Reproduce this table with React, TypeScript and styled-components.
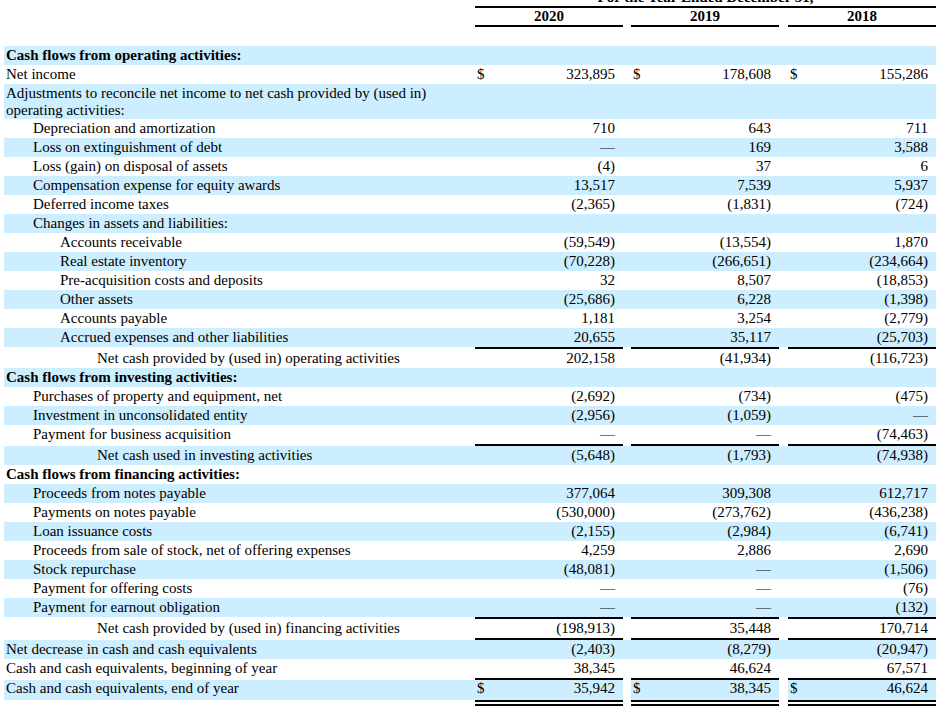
import React from "react";
import styled, { createGlobalStyle, css } from "styled-components";

const GlobalStyle = createGlobalStyle`
  html, body {
    margin: 0;
    padding: 0;
    background: #ffffff;
  }
  body {
    font-family: "Liberation Serif", "Times New Roman", serif;
    color: #000000;
    overflow: hidden;
  }
`;

const BLUE = "#cceeff";

type Row = {
  label: string;
  indent: 0 | 1 | 2 | 3;
  bold?: boolean;
  values?: [string, string, string];
  dollar?: boolean;
  total?: boolean;
  final?: boolean;
  multi?: boolean;
};

const rows: Row[] = [
  { label: "Cash flows from operating activities:", indent: 0, bold: true },
  { label: "Net income", indent: 0, values: ["323,895", "178,608", "155,286"], dollar: true },
  { label: "Adjustments to reconcile net income to net cash provided by (used in) operating activities:", indent: 0, multi: true },
  { label: "Depreciation and amortization", indent: 1, values: ["710", "643", "711"] },
  { label: "Loss on extinguishment of debt", indent: 1, values: ["—", "169", "3,588"] },
  { label: "Loss (gain) on disposal of assets", indent: 1, values: ["(4)", "37", "6"] },
  { label: "Compensation expense for equity awards", indent: 1, values: ["13,517", "7,539", "5,937"] },
  { label: "Deferred income taxes", indent: 1, values: ["(2,365)", "(1,831)", "(724)"] },
  { label: "Changes in assets and liabilities:", indent: 1 },
  { label: "Accounts receivable", indent: 2, values: ["(59,549)", "(13,554)", "1,870"] },
  { label: "Real estate inventory", indent: 2, values: ["(70,228)", "(266,651)", "(234,664)"] },
  { label: "Pre-acquisition costs and deposits", indent: 2, values: ["32", "8,507", "(18,853)"] },
  { label: "Other assets", indent: 2, values: ["(25,686)", "6,228", "(1,398)"] },
  { label: "Accounts payable", indent: 2, values: ["1,181", "3,254", "(2,779)"] },
  { label: "Accrued expenses and other liabilities", indent: 2, values: ["20,655", "35,117", "(25,703)"] },
  { label: "Net cash provided by (used in) operating activities", indent: 3, values: ["202,158", "(41,934)", "(116,723)"], total: true },
  { label: "Cash flows from investing activities:", indent: 0, bold: true },
  { label: "Purchases of property and equipment, net", indent: 1, values: ["(2,692)", "(734)", "(475)"] },
  { label: "Investment in unconsolidated entity", indent: 1, values: ["(2,956)", "(1,059)", "—"] },
  { label: "Payment for business acquisition", indent: 1, values: ["—", "—", "(74,463)"] },
  { label: "Net cash used in investing activities", indent: 3, values: ["(5,648)", "(1,793)", "(74,938)"], total: true },
  { label: "Cash flows from financing activities:", indent: 0, bold: true },
  { label: "Proceeds from notes payable", indent: 1, values: ["377,064", "309,308", "612,717"] },
  { label: "Payments on notes payable", indent: 1, values: ["(530,000)", "(273,762)", "(436,238)"] },
  { label: "Loan issuance costs", indent: 1, values: ["(2,155)", "(2,984)", "(6,741)"] },
  { label: "Proceeds from sale of stock, net of offering expenses", indent: 1, values: ["4,259", "2,886", "2,690"] },
  { label: "Stock repurchase", indent: 1, values: ["(48,081)", "—", "(1,506)"] },
  { label: "Payment for offering costs", indent: 1, values: ["—", "—", "(76)"] },
  { label: "Payment for earnout obligation", indent: 1, values: ["—", "—", "(132)"] },
  { label: "Net cash provided by (used in) financing activities", indent: 3, values: ["(198,913)", "35,448", "170,714"], total: true },
  { label: "Net decrease in cash and cash equivalents", indent: 0, values: ["(2,403)", "(8,279)", "(20,947)"], total: true },
  { label: "Cash and cash equivalents, beginning of year", indent: 0, values: ["38,345", "46,624", "67,571"] },
  { label: "Cash and cash equivalents, end of year", indent: 0, values: ["35,942", "38,345", "46,624"], dollar: true, total: true, final: true },
];

const indentPad = [2, 29, 56, 93];

const Page = styled.div`
  padding: 0 0 0 4px;
  margin-top: -11px;
`;

const Table = styled.table`
  table-layout: fixed;
  border-collapse: separate;
  border-spacing: 0;
  width: 932px;
  font-size: 15px;
  line-height: 17px;
`;

const Col = styled.col<{ $w: number }>`
  width: ${(p) => p.$w}px;
`;

const TitleCell = styled.th`
  padding: 0;
  font-weight: bold;
  text-align: center;
  border-bottom: 2px solid #000;
  white-space: nowrap;
`;

const YearCell = styled.th`
  padding: 0;
  font-weight: bold;
  text-align: center;
  border-bottom: 2px solid #000;
`;

const BlankHead = styled.th`
  padding: 0;
`;

const SpacerRow = styled.tr`
  height: 19px;
`;

type CellProps = { $band?: boolean; $total?: boolean; $final?: boolean; $ink?: boolean };

/* shared vertical structure of every body cell: rules, padding, band colour */
const cellFrame = css<CellProps>`
  vertical-align: middle;
  background: ${(p) => (p.$band ? BLUE : "transparent")};
  background-clip: padding-box;
  padding-top: ${(p) => (p.$final ? 0 : 1)}px;
  padding-bottom: ${(p) => (p.$final ? 3 : 1)}px;
  border-top: ${(p) => (p.$total ? `2px solid ${p.$ink ? "#000" : "transparent"}` : "0")};
  border-bottom: ${(p) => (p.$final ? `6px double ${p.$ink ? "#000" : "transparent"}` : "0")};
`;

const LabelCell = styled.td<CellProps & { $indent: number; $bold?: boolean; $multi?: boolean }>`
  ${cellFrame}
  padding-left: ${(p) => indentPad[p.$indent]}px;
  padding-right: 2px;
  font-weight: ${(p) => (p.$bold ? "bold" : "normal")};
  line-height: ${(p) => (p.$multi ? "16.5px" : "17px")};
  text-align: left;
`;

const DollarCell = styled.td<CellProps>`
  ${cellFrame}
  padding-left: 2px;
  padding-right: 0;
  text-align: left;
  white-space: nowrap;
`;

const NumCell = styled.td<CellProps>`
  ${cellFrame}
  padding-left: 0;
  padding-right: 8px;
  text-align: right;
  white-space: nowrap;
`;

const GapCell = styled.td<CellProps>`
  ${cellFrame}
  padding-left: 0;
  padding-right: 0;
`;

export default function App() {
  return (
    <>
      <GlobalStyle />
      <Page>
        <Table>
          <colgroup>
            <Col $w={471} />
            <Col $w={20} />
            <Col $w={128} />
            <Col $w={8} />
            <Col $w={20} />
            <Col $w={128} />
            <Col $w={9} />
            <Col $w={20} />
            <Col $w={128} />
          </colgroup>
          <thead>
            <tr>
              <BlankHead />
              <TitleCell colSpan={8}>For the Year Ended December 31,</TitleCell>
            </tr>
            <tr>
              <BlankHead />
              <YearCell colSpan={2}>2020</YearCell>
              <BlankHead />
              <YearCell colSpan={2}>2019</YearCell>
              <BlankHead />
              <YearCell colSpan={2}>2018</YearCell>
            </tr>
            <SpacerRow>
              <BlankHead colSpan={9} />
            </SpacerRow>
          </thead>
          <tbody>
            {rows.map((r, i) => {
              const band = i % 2 === 0;
              return (
                <tr key={i}>
                  <LabelCell
                    $indent={r.indent}
                    $bold={r.bold}
                    $multi={r.multi}
                    $band={band}
                    $total={r.total}
                    $final={r.final}
                  >
                    {r.label}
                  </LabelCell>
                  {[0, 1, 2].map((c) => (
                    <React.Fragment key={c}>
                      {c > 0 && (
                        <GapCell $band={band && !r.final} $total={r.total} $final={r.final} />
                      )}
                      <DollarCell $band={band} $total={r.total} $final={r.final} $ink>
                        {r.dollar ? "$" : ""}
                      </DollarCell>
                      <NumCell $band={band} $total={r.total} $final={r.final} $ink>
                        {r.values ? r.values[c] : ""}
                      </NumCell>
                    </React.Fragment>
                  ))}
                </tr>
              );
            })}
          </tbody>
        </Table>
      </Page>
    </>
  );
}
